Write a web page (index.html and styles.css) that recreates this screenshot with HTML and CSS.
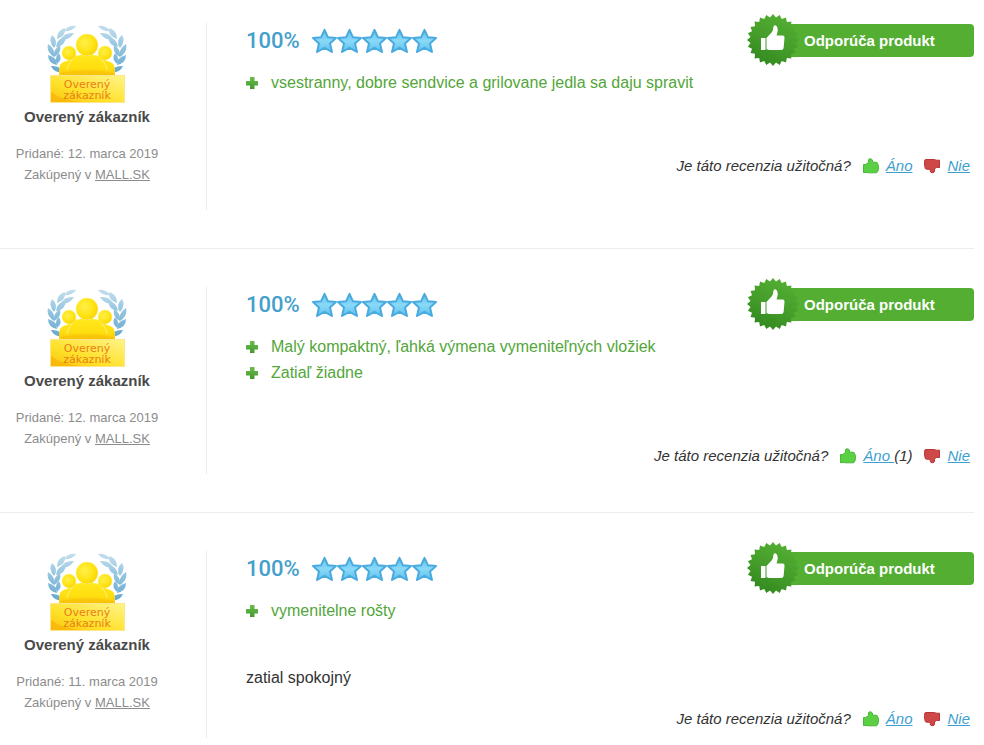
FILE: index.html
```
<!DOCTYPE html>
<html lang="sk">
<head>
    <meta charset="UTF-8">
    <meta name="viewport" content="width=device-width, initial-scale=1.0">
    <title>Recenzie</title>
    <link rel="stylesheet" href="styles.css">
</head>
<body>

<!-- Shared icons -->
<svg class="icon-defs" aria-hidden="true">
    <defs>
        <linearGradient id="starFill" x1="0" y1="0" x2="0" y2="1">
            <stop offset="0" stop-color="#62bdea"/>
            <stop offset="0.5" stop-color="#8ad9f8"/>
            <stop offset="1" stop-color="#5cc0ec"/>
        </linearGradient>
        <linearGradient id="leafFill" gradientUnits="userSpaceOnUse" x1="0" y1="2" x2="0" y2="48">
            <stop offset="0" stop-color="#c3deed"/>
            <stop offset="0.4" stop-color="#9ac8e1"/>
            <stop offset="1" stop-color="#66a9cf"/>
        </linearGradient>
        <radialGradient id="personFill" cx="0.4" cy="0.4" r="0.7">
            <stop offset="0" stop-color="#fff04a"/>
            <stop offset="0.6" stop-color="#fee312"/>
            <stop offset="1" stop-color="#f8cc00"/>
        </radialGradient>
        <linearGradient id="bodyFill" x1="0" y1="0" x2="0" y2="1">
            <stop offset="0" stop-color="#ffe81c"/>
            <stop offset="0.6" stop-color="#ffdf10"/>
            <stop offset="1" stop-color="#f9c50a"/>
        </linearGradient>
        <linearGradient id="plateFill" x1="0" y1="1" x2="1" y2="0">
            <stop offset="0" stop-color="#fbc60c"/>
            <stop offset="0.4" stop-color="#fee12a"/>
            <stop offset="1" stop-color="#fff488"/>
        </linearGradient>
        <linearGradient id="sealFill" gradientUnits="userSpaceOnUse" x1="38" y1="8" x2="18" y2="48">
            <stop offset="0" stop-color="#50ab31"/>
            <stop offset="0.5" stop-color="#459e2b"/>
            <stop offset="1" stop-color="#358b20"/>
        </linearGradient>
        <linearGradient id="plusFill" x1="0" y1="0" x2="0" y2="1">
            <stop offset="0" stop-color="#6cbd4c"/>
            <stop offset="1" stop-color="#43992c"/>
        </linearGradient>
    </defs>

    <symbol id="star" viewBox="0 0 25 26">
        <path d="M12.5 1.8 L16 9.3 L24 10 L18 15.4 L20 24 L12.5 19.8 L5 24 L7 15.4 L1 10 L9 9.3 Z" fill="url(#starFill)" stroke="#49aae0" stroke-width="2" stroke-linejoin="round"/>
    </symbol>

    <symbol id="plus" viewBox="0 0 12 12">
        <path d="M4 0 H8.5 V4 H12 V8.5 H8.5 V12 H4 V8.5 H0 V4 H4 Z" fill="url(#plusFill)"/>
    </symbol>

    <symbol id="laurel" viewBox="0 0 80 80">
        <g fill="url(#leafFill)">
            <path d="M17 7 Q21 1 29 2 Q25 8 17 7 Z"/>
            <path d="M10 15 Q10 6 18 4 Q19 12 10 15 Z"/>
            <path d="M14 15 Q18 8 27 9 Q22 17 14 15 Z"/>
            <path d="M7 24 Q1 17 5 11 Q12 17 7 24 Z"/>
            <path d="M9 23 Q10 14 19 13 Q18 22 9 23 Z"/>
            <path d="M7 33 Q-1 28 1 20 Q9 25 7 33 Z"/>
            <path d="M7 33 Q6 25 13 21 Q15 29 7 33 Z"/>
            <path d="M10 41 Q1 39 1 31 Q10 33 10 41 Z"/>
            <path d="M10 40 Q7 34 12 29 Q16 35 10 40 Z"/>
            <path d="M15 48 Q7 49 4 42 Q13 41 15 48 Z"/>
        </g>
    </symbol>

    <symbol id="customer" viewBox="0 0 80 80">
        <use href="#laurel" width="80" height="80"/>
        <use href="#laurel" width="80" height="80" transform="matrix(-1 0 0 1 80 0)"/>
        <path d="M12 52 V46 Q12 38 20 37 Q25 31 34 31 H46 Q55 31 60 37 Q68 38 68 46 V52 Z" fill="url(#bodyFill)"/>
        <path d="M20 46 Q21 40 25 36 M60 46 Q59 40 55 36" fill="none" stroke="#fff176" stroke-width="1"/>
        <g fill="url(#personFill)" stroke="#fff28a" stroke-width="0.6">
            <circle cx="22" cy="29" r="7"/>
            <circle cx="58" cy="29" r="7"/>
            <circle cx="40" cy="21" r="11"/>
        </g>
        <path d="M14 49 Q40 43 66 49 V51 H14 Z" fill="#f5b90a" opacity="0.4"/>
        <rect x="3.5" y="51.5" width="74" height="27" fill="url(#plateFill)" stroke="#fde68a"/>
        <path d="M4 78 V68 Q14 76 36 78 Z" fill="#f6ae08" opacity="0.6"/>
    </symbol>

    <symbol id="seal" viewBox="0 0 52 52">
        <g fill="url(#sealFill)">
            <path d="M26 0 L29 3.5 L32.7 0.9 L34.7 5 L39 3.5 L39.8 8 L44.4 7.6 L44 12.2 L48.5 13 L47 17.3 L51.1 19.3 L48.5 23 L52 26 L48.5 29 L51.1 32.7 L47 34.7 L48.5 39 L44 39.8 L44.4 44.4 L39.8 44 L39 48.5 L34.7 47 L32.7 51.1 L29 48.5 L26 52 L23 48.5 L19.3 51.1 L17.3 47 L13 48.5 L12.2 44 L7.6 44.4 L8 39.8 L3.5 39 L5 34.7 L0.9 32.7 L3.5 29 L0 26 L3.5 23 L0.9 19.3 L5 17.3 L3.5 13 L8 12.2 L7.6 7.6 L12.2 8 L13 3.5 L17.3 5 L19.3 0.9 L23 3.5 Z"/>
        </g>
        <path d="M14 24 H18.5 V36 H14 Z" fill="#fff"/>
        <path d="M19.5 24 L25 18 Q26.3 16 26.5 12.5 Q27.5 10.6 29.3 11.8 Q32 15 29.6 21.5 H36 Q37.8 21.8 37.5 24 L36.6 34 Q36.3 36 34.3 36 H22.5 Q21 35.8 19.5 35 Z" fill="#fff"/>
    </symbol>

    <symbol id="thumbUp" viewBox="0 0 16 16">
        <path d="M0.5 6.5 H2.5 L5.5 4.5 V2 Q5.6 0.7 7.3 0.8 Q9.6 1 9.5 3 V4.2 H13 Q14.6 4.4 14.6 5.6 L15.5 8 L15.2 12.5 L13.6 14.8 H5.5 L4 14.5 H0.5 Z" fill="#5bd045" stroke="#47b838"/>
    </symbol>

    <symbol id="thumbDown" viewBox="0 0 16 16">
        <path d="M0.8 2 L2 1.5 H10.5 L12 2.2 H15.5 V9.5 H12.5 L10.5 10.8 V13.4 Q10.2 14.8 8 14.7 Q6 14.5 6.2 12.6 V11.2 H2.6 Q1 11 1 9.5 L0.5 6 Z" fill="#cf4848" stroke="#b93434"/>
    </symbol>
</svg>

<main class="reviews">

    <article class="review">
        <div class="author">
            <div class="author-badge">
                <svg aria-hidden="true"><use href="#customer"/></svg>
                <span class="plate-text">Overený<br>zákazník</span>
            </div>
            <h3 class="author-name">Overený zákazník</h3>
            <p class="author-info">Pridané: 12. marca 2019<br>Zakúpený v <a href="#">MALL.SK</a></p>
        </div>
        <div class="content">
            <div class="review-header">
                <div class="rating">
                    <span class="rating-value">100%</span>
                    <span class="stars">
                        <svg><use href="#star"/></svg>
                        <svg><use href="#star"/></svg>
                        <svg><use href="#star"/></svg>
                        <svg><use href="#star"/></svg>
                        <svg><use href="#star"/></svg>
                    </span>
                </div>
                <div class="recommend">
                    <svg class="seal" aria-hidden="true"><use href="#seal"/></svg>
                    Odporúča produkt
                </div>
            </div>
            <ul class="pros">
                <li><svg><use href="#plus"/></svg>vsestranny, dobre sendvice a grilovane jedla sa daju spravit</li>
            </ul>
            <div class="helpful">
                <span>Je táto recenzia užitočná?</span>
                <span class="vote"><svg><use href="#thumbUp"/></svg><a href="#">Áno</a></span>
                <span class="vote"><svg><use href="#thumbDown"/></svg><a href="#">Nie</a></span>
            </div>
        </div>
    </article>

    <article class="review">
        <div class="author">
            <div class="author-badge">
                <svg aria-hidden="true"><use href="#customer"/></svg>
                <span class="plate-text">Overený<br>zákazník</span>
            </div>
            <h3 class="author-name">Overený zákazník</h3>
            <p class="author-info">Pridané: 12. marca 2019<br>Zakúpený v <a href="#">MALL.SK</a></p>
        </div>
        <div class="content">
            <div class="review-header">
                <div class="rating">
                    <span class="rating-value">100%</span>
                    <span class="stars">
                        <svg><use href="#star"/></svg>
                        <svg><use href="#star"/></svg>
                        <svg><use href="#star"/></svg>
                        <svg><use href="#star"/></svg>
                        <svg><use href="#star"/></svg>
                    </span>
                </div>
                <div class="recommend">
                    <svg class="seal" aria-hidden="true"><use href="#seal"/></svg>
                    Odporúča produkt
                </div>
            </div>
            <ul class="pros">
                <li><svg><use href="#plus"/></svg>Malý kompaktný, ľahká výmena vymeniteľných vložiek</li>
                <li><svg><use href="#plus"/></svg>Zatiaľ žiadne</li>
            </ul>
            <div class="helpful">
                <span>Je táto recenzia užitočná?</span>
                <span class="vote"><svg><use href="#thumbUp"/></svg><span><a href="#">Áno </a>(1)</span></span>
                <span class="vote"><svg><use href="#thumbDown"/></svg><a href="#">Nie</a></span>
            </div>
        </div>
    </article>

    <article class="review">
        <div class="author">
            <div class="author-badge">
                <svg aria-hidden="true"><use href="#customer"/></svg>
                <span class="plate-text">Overený<br>zákazník</span>
            </div>
            <h3 class="author-name">Overený zákazník</h3>
            <p class="author-info">Pridané: 11. marca 2019<br>Zakúpený v <a href="#">MALL.SK</a></p>
        </div>
        <div class="content">
            <div class="review-header">
                <div class="rating">
                    <span class="rating-value">100%</span>
                    <span class="stars">
                        <svg><use href="#star"/></svg>
                        <svg><use href="#star"/></svg>
                        <svg><use href="#star"/></svg>
                        <svg><use href="#star"/></svg>
                        <svg><use href="#star"/></svg>
                    </span>
                </div>
                <div class="recommend">
                    <svg class="seal" aria-hidden="true"><use href="#seal"/></svg>
                    Odporúča produkt
                </div>
            </div>
            <ul class="pros">
                <li><svg><use href="#plus"/></svg>vymenitelne rošty</li>
            </ul>
            <p class="review-text">zatial spokojný</p>
            <div class="helpful">
                <span>Je táto recenzia užitočná?</span>
                <span class="vote"><svg><use href="#thumbUp"/></svg><a href="#">Áno</a></span>
                <span class="vote"><svg><use href="#thumbDown"/></svg><a href="#">Nie</a></span>
            </div>
        </div>
    </article>

</main>

</body>
</html>
```

FILE: styles.css
```
* {
    box-sizing: border-box;
}
body {
    font-family: "Liberation Sans", Arial, sans-serif;
    font-size: 16px;
    color: #333;
    background-color: #fff;
    margin: 0;
}
a {
    color: #3f9fd0;
}
.icon-defs {
    position: absolute;
    width: 0;
    height: 0;
}
.reviews {
    margin-right: 10px;
}
.review {
    display: flex;
    padding: 38px 0;
    border-bottom: 1px solid #ececec;
}
.review:first-child {
    padding-top: 23px;
}
.review:last-child {
    padding-bottom: 7px;
    border-bottom: none;
}

/* Left column */
.author {
    flex: 0 0 207px;
    min-height: 187px;
    padding-right: 32px;
    border-right: 1px solid #ececec;
    text-align: center;
}
.author-badge {
    position: relative;
    width: 80px;
    height: 80px;
    margin: 1px auto 0;
}
.author-badge svg {
    display: block;
    width: 80px;
    height: 80px;
}
.plate-text {
    position: absolute;
    left: 0;
    right: 0;
    bottom: 3px;
    font-family: "DejaVu Sans", sans-serif;
    font-size: 11px;
    line-height: 11px;
    color: #e8801a;
}
.author-name {
    margin: 3px 0 16px;
    font-size: 15px;
    line-height: 20px;
    color: #4a4a4a;
}
.author-info {
    margin: 0;
    font-size: 13px;
    line-height: 21px;
    color: #8c8c8c;
}
.author-info a {
    color: #8c8c8c;
}

/* Right column */
.content {
    flex: 1;
    padding-left: 39px;
}
.review-header {
    display: flex;
    justify-content: space-between;
    align-items: center;
    height: 35px;
}
.rating {
    display: flex;
    align-items: center;
    gap: 12px;
}
.rating-value {
    font-family: Roboto, sans-serif;
    font-size: 22px;
    font-weight: 500;
    color: #459fcb;
}
.stars {
    display: flex;
}
.stars svg {
    width: 25px;
    height: 26px;
}
.recommend {
    position: relative;
    width: 200px;
    padding-left: 30px;
    border-radius: 4px;
    background-color: #53ae31;
    color: #fff;
    font-size: 15px;
    font-weight: bold;
    line-height: 33px;
}
.seal {
    position: absolute;
    left: -27px;
    top: -10px;
    width: 52px;
    height: 52px;
}
.pros {
    list-style: none;
    margin: 12px 0 0;
    padding: 0;
    color: #53a63a;
}
.pros li {
    display: flex;
    align-items: center;
    gap: 13px;
    line-height: 26px;
}
.pros svg {
    width: 12px;
    height: 12px;
}
.review-text {
    margin: 42px 0 0;
    line-height: 24px;
}
.helpful {
    display: flex;
    justify-content: flex-end;
    align-items: center;
    gap: 12px;
    margin-top: 57px;
    padding-right: 4px;
    font-size: 15px;
    font-style: italic;
    line-height: 26px;
}
.review-text + .helpful {
    margin-top: 16px;
}
.vote {
    display: flex;
    align-items: center;
    gap: 7px;
}
.vote svg {
    width: 16px;
    height: 16px;
}
```
